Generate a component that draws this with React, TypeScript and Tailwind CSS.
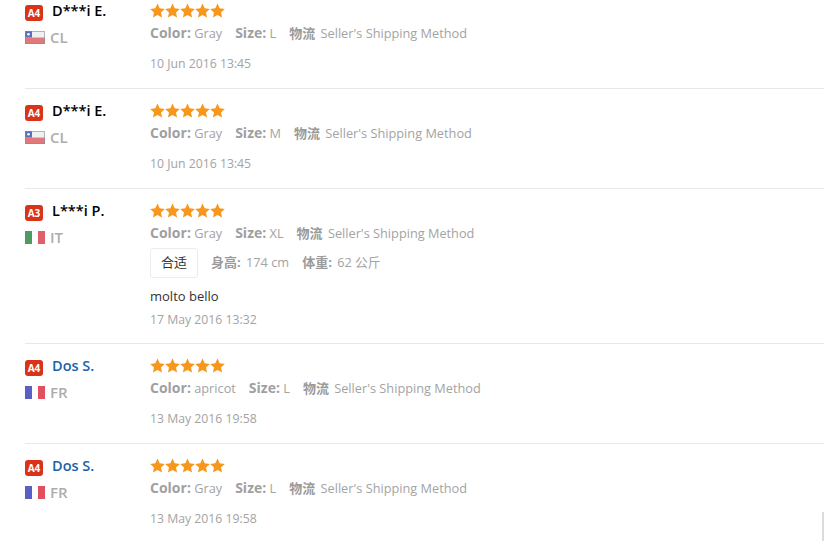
const FONT = "font-['Open_Sans','Noto_Sans_CJK_SC',sans-serif]";

type Flag = "CL" | "IT" | "FR";

type Review = {
  level: string;
  name: string;
  link?: boolean;
  country: Flag;
  color: string;
  size: string;
  date: string;
  fit?: boolean;
  comment?: string;
};

const REVIEWS: Review[] = [
  { level: "A4", name: "D***i E.", country: "CL", color: "Gray", size: "L", date: "10 Jun 2016 13:45" },
  { level: "A4", name: "D***i E.", country: "CL", color: "Gray", size: "M", date: "10 Jun 2016 13:45" },
  { level: "A3", name: "L***i P.", country: "IT", color: "Gray", size: "XL", date: "17 May 2016 13:32", fit: true, comment: "molto bello" },
  { level: "A4", name: "Dos S.", link: true, country: "FR", color: "apricot", size: "L", date: "13 May 2016 19:58" },
  { level: "A4", name: "Dos S.", link: true, country: "FR", color: "Gray", size: "L", date: "13 May 2016 19:58" },
];

function FlagIcon({ country }: { country: Flag }) {
  if (country === "CL") {
    return (
      <svg width="20" height="13" viewBox="0 0 20 13">
        <rect width="20" height="6.5" fill="#eef0f4" />
        <rect y="6.5" width="20" height="6.5" fill="#e0787c" />
        <rect width="7" height="6.5" fill="#5a6fb5" />
        <circle cx="3.5" cy="3.2" r="1.3" fill="#fff" />
        <rect x="0.5" y="0.5" width="19" height="12" fill="none" stroke="#8a8a92" strokeOpacity="0.6" />
      </svg>
    );
  }
  const colors = country === "IT" ? ["#4f9a63", "#ffffff", "#e0606a"] : ["#5a5fc4", "#ffffff", "#e0505e"];
  return (
    <svg width="20" height="13" viewBox="0 0 20 13">
      <rect width="7" height="13" fill={colors[0]} />
      <rect x="7" width="6" height="13" fill={colors[1]} />
      <rect x="13" width="7" height="13" fill={colors[2]} />
    </svg>
  );
}

function Stars() {
  return (
    <div className="flex h-[15px] gap-0">
      {[0, 1, 2, 3, 4].map((i) => (
        <svg key={i} width="15" height="15" viewBox="0 0 24 24" fill="#f7971d">
          <path d="M12 .8l3.5 7.6 8.2 1-6.1 5.6 1.7 8.2-7.3-4.2-7.3 4.2L6.4 15 .3 9.4l8.2-1z" />
        </svg>
      ))}
    </div>
  );
}

function Label({ children }: { children: string }) {
  return <span className="text-[14px] font-bold text-[#a0a0a0]">{children}</span>;
}

function CjkLabel({ children }: { children: string }) {
  return <span className="mr-[2px] text-[13px] font-bold text-[#9a9a9a]">{children}</span>;
}

function ReviewRow({ review }: { review: Review }) {
  return (
    <div className="ml-[25px] flex border-b border-[#e8e8e8] pt-[14px] pb-[15px]">
      <div className="w-[125px] shrink-0">
        <div className="flex h-[16px] items-center">
          <span className="mt-[4px] flex h-[16px] w-[18px] items-center justify-center rounded-[3px] bg-[#d9331a] text-[10px] font-bold text-white">
            {review.level}
          </span>
          <span className={`ml-[9px] text-[14.5px] font-semibold ${review.link ? "text-[#1a63a8]" : "text-black"}`}>
            {review.name}
          </span>
        </div>
        <div className="mt-[10px] flex h-[16px] items-center">
          <FlagIcon country={review.country} />
          <span className="ml-[5px] text-[15px] font-semibold text-[#adadad]">{review.country}</span>
        </div>
      </div>
      <div className="min-w-0 flex-1">
        <Stars />
        <div className="mt-[6px] flex h-[18px] items-center gap-[13px] text-[12.75px] leading-[18px] text-[#a3a3a3]">
          <span>
            <Label>Color:</Label> {review.color}
          </span>
          <span>
            <Label>Size:</Label> {review.size}
          </span>
          <span>
            <CjkLabel>物流</CjkLabel> Seller's Shipping Method
          </span>
        </div>
        {review.fit && (
          <div className="mt-[6px] flex items-center gap-[13px] text-[12.75px] text-[#a3a3a3]">
            <span className="flex h-[30px] w-[48px] items-center justify-center rounded-[3px] border border-[#ececec] text-[13px] text-[#333]">
              合适
            </span>
            <span>
              <CjkLabel>身高:</CjkLabel> 174 cm
            </span>
            <span>
              <CjkLabel>体重:</CjkLabel> 62 公斤
            </span>
          </div>
        )}
        {review.comment && <div className="mt-[9px] h-[18px] text-[13px] leading-[18px] text-[#333]">{review.comment}</div>}
        <div className={`${review.comment ? "mt-[6px] h-[17px]" : "mt-[13px] h-[18px]"} text-[12.25px] leading-[18px] text-[#a3a3a3]`}>
          {review.date}
        </div>
      </div>
    </div>
  );
}

export default function App() {
  return (
    <div className={`${FONT} relative h-[541px] w-[824px] overflow-hidden bg-white`}>
      <div className="-mt-[11px]">
        {REVIEWS.map((review, i) => (
          <ReviewRow key={i} review={review} />
        ))}
      </div>
      <div className="absolute right-0 bottom-0 h-[29px] w-[2px] bg-[#dcdcdc]" />
    </div>
  );
}
